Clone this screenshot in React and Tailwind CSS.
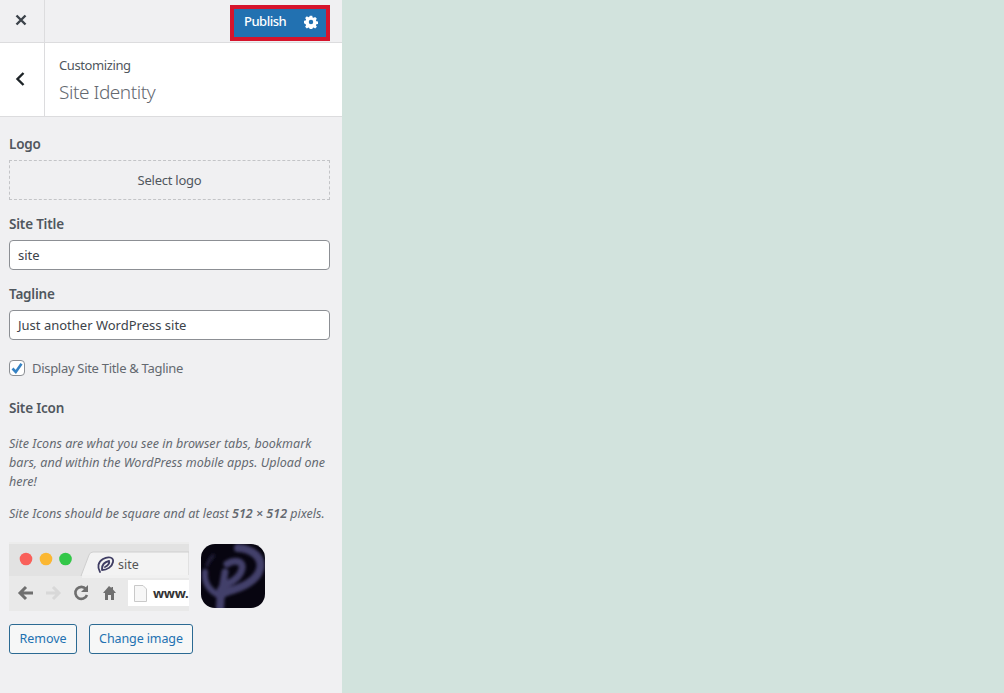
const font = { fontFamily: '"Noto Sans", "Open Sans", sans-serif' };

function Label({ children, className = "" }) {
  return <div className={`text-[13.5px] leading-[20px] font-semibold tracking-[-0.2px] text-[#50575e] ${className}`}>{children}</div>;
}

function Field({ value }) {
  return (
    <div className="mt-[6px] h-[30px] w-[321px] rounded-[4px] border border-[#8c8f94] bg-white pl-[8px] text-[13px] leading-[28px] text-[#3c434a]">
      {value}
    </div>
  );
}

function Preview() {
  return (
    <svg width="180" height="69" viewBox="0 0 180 69" className="block">
      <rect width="180" height="69" fill="#e8e8e8" />
      <rect width="180" height="36" fill="#e2e2e2" />
      <rect width="180" height="2" fill="#ececec" />
      <path d="M72 34 L80 13 Q81 10 84 10 L180 10 L180 34 Z" fill="#f3f3f3" stroke="#cfcfcf" />
      <rect x="0" y="34" width="180" height="35" fill="#e9e9e9" />
      <rect x="73" y="33" width="107" height="3" fill="#f1f1f1" />
      <circle cx="17" cy="17" r="6.300" fill="#f9605a" />
      <circle cx="37" cy="17" r="6.300" fill="#fbb732" />
      <circle cx="56.500" cy="17" r="6.300" fill="#33c748" />
      <g fill="none" stroke="#3f3d63" strokeWidth="1.800" strokeLinecap="round">
        <path d="M91 30 C88 25 89 20 94 17 C99 14 105 15 104 20 C103 25 98 28 93 28" />
        <path d="M93 27 C93 23 95 20 100 19 C101 22 98 24 96 25" />
      </g>
      <g stroke="#6f6f6f" fill="none" strokeWidth="3">
        <path d="M24 51 H12 M17 45 L11 51 L17 57" />
      </g>
      <g stroke="#d8d8d8" fill="none" strokeWidth="3">
        <path d="M37 51 H49 M44 45 L50 51 L44 57" />
      </g>
      <path d="M77 47 A6 6 0 1 0 78 53" stroke="#6f6f6f" strokeWidth="2.600" fill="none" />
      <path d="M79 43 V50 H72 Z" fill="#6f6f6f" />
      <path d="M100 44 L94 51 H96 V58 H99 V53 H102 V58 H105 V51 H107 L104 47.500 V45 H102.500 V46 Z" fill="#6f6f6f" />
      <rect x="119" y="38" width="61" height="26" fill="#ffffff" />
      <path d="M125.500 43.500 H134 L137.500 47 V59.500 H125.500 Z" fill="#f7f7f7" stroke="#c9c9c9" />
    </svg>
  );
}

function SiteIcon() {
  return (
    <svg width="64" height="64" viewBox="0 0 64 64" className="block ml-[12px] mt-[2px] shrink-0 rounded-[14px]">
      <defs>
        <filter id="blur"><feGaussianBlur stdDeviation="1.500" /></filter>
      </defs>
      <rect width="64" height="64" fill="#070510" />
      <g fill="none" stroke="#433f6b" filter="url(#blur)" strokeLinecap="round">
        <path d="M19 66 C19 58 20 52 20 46" strokeWidth="8" />
        <path d="M24 28 C23 34 22 40 21 46" strokeWidth="7" />
        <path d="M26 20 C34 15 43 17 41 25 C39 33 33 37 26 40" strokeWidth="7" />
        <path d="M37 4 C52 5 62 14 59 25 C56 37 40 44 28 47 C24 48 21 50 19 52" strokeWidth="8" />
        <path d="M4 28 C3 38 8 46 17 51" strokeWidth="6" />
        <path d="M12 12 C9 15 7 18 6 21" strokeWidth="4" stroke="#1e1b36" />
      </g>
    </svg>
  );
}

export default function App() {
  return (
    <div className="flex min-h-[693px] w-full bg-[#d2e3dd] overflow-hidden" style={font}>
      <aside className="w-[342px] shrink-0 bg-[#f0f0f2] flex flex-col">
        <div className="h-[43px] flex items-stretch border-b border-[#dcdcde]">
          <div className="w-[45px] border-r border-[#dcdcde] flex items-center justify-center pr-[2px] pb-[2px]">
            <svg width="14" height="14" viewBox="0 0 14 14" fill="none" stroke="#3c434a" strokeWidth="2.400">
              <path d="M2.500 2.500 L11.500 11.500 M11.500 2.500 L2.500 11.500" />
            </svg>
          </div>
          <div className="flex-1 flex justify-end items-start pt-[5px] pr-[12px]">
            <div className="w-[100px] h-[36px] border-[4px] border-[#d6142c] bg-[#2271b1] flex items-center justify-between pl-[10px] pr-[8px] pb-[2px] text-[13px] tracking-[-0.5px] font-medium text-white">
              <span>Publish</span>
              <svg width="14" height="14" viewBox="0 0 20 20" fill="#ffffff">
                <path fillRule="evenodd" d="M8.200 1h3.600l.5 2.500 1.500.6 2.100-1.400 2.500 2.500-1.400 2.100.6 1.500 2.400.5v3.500l-2.400.5-.6 1.500 1.400 2.100-2.500 2.500-2.100-1.400-1.500.6-.5 2.400H8.200l-.5-2.400-1.500-.6-2.100 1.400-2.500-2.500 1.400-2.100-.6-1.500L0 11.800V8.300l2.400-.5.6-1.500-1.400-2.100 2.500-2.500 2.100 1.400 1.500-.6zM10 13.200a3.200 3.200 0 1 0 0-6.400 3.200 3.200 0 0 0 0 6.400z" />
              </svg>
            </div>
          </div>
        </div>

        <div className="h-[74px] flex items-stretch bg-white border-b border-[#dcdcde]">
          <div className="w-[45px] border-r border-[#dcdcde] flex items-center justify-center pr-[4px] pb-[2px]">
            <svg width="12" height="16" viewBox="0 0 12 16" fill="none" stroke="#1d2327" strokeWidth="2.400">
              <path d="M9.500 2 L3.500 8 L9.500 14" />
            </svg>
          </div>
          <div className="pl-[14px] pt-[13px]">
            <div className="text-[13px] leading-[19px] tracking-[-0.4px] text-[#50575e]">Customizing</div>
            <div className="text-[19px] leading-[27px] mt-[4px] tracking-[-0.45px] font-light text-[#646970]">Site Identity</div>
          </div>
        </div>

        <div className="pl-[9px] pt-[17px] flex flex-col">
          <Label>Logo</Label>
          <div className="mt-[6px] h-[40px] w-[321px] border border-dashed border-[#c3c4c7] flex items-center justify-center pt-[2px] text-[13px] tracking-[-0.25px] text-[#50575e]">
            Select logo
          </div>

          <Label className="mt-[14px]">Site Title</Label>
          <Field value="site" />

          <Label className="mt-[14px]">Tagline</Label>
          <Field value="Just another WordPress site" />

          <div className="mt-[20px] h-[16px] flex items-center gap-[7px]">
            <div className="w-[16px] h-[16px] rounded-[4px] border border-[#8c8f94] bg-white flex items-center justify-center">
              <svg width="14" height="14" viewBox="0 0 14 14" fill="none" stroke="#3582c4" strokeWidth="2.600">
                <path d="M2.500 7.500 L5.800 11 L11.500 2.800" />
              </svg>
            </div>
            <span className="pt-[2px] text-[13px] tracking-[-0.3px] text-[#646970]">Display Site Title &amp; Tagline</span>
          </div>

          <Label className="mt-[22px]">Site Icon</Label>

          <div className="mt-[16px] w-[325px] text-[12.500px] leading-[19px] tracking-[0.03px] italic text-[#646970]">
            Site Icons are what you see in browser tabs, bookmark bars, and within the WordPress mobile apps. Upload one here!
          </div>
          <div className="mt-[13px] text-[12.500px] leading-[19px] italic text-[#646970] whitespace-nowrap">
            Site Icons should be square and at least <b className="font-semibold">512 × 512</b> pixels.
          </div>

          <div className="mt-[19px] flex items-start">
            <div className="relative w-[180px] h-[69px]">
              <Preview />
              <span className="absolute left-[109px] top-[14px] text-[12.500px] leading-[18px] text-[#555]">site</span>
              <span className="absolute left-[144px] top-[41px] text-[13px] leading-[20px] tracking-[-0.3px] font-bold text-[#333]">www.</span>
            </div>
            <SiteIcon />
          </div>

          <div className="mt-[13px] flex gap-[12px]">
            <div className="w-[68px] h-[30px] rounded-[3px] border border-[#2b6a93] bg-[#f6f7f7] flex items-center justify-center pt-[1px] text-[12.500px] text-[#2271b1]">Remove</div>
            <div className="w-[104px] h-[30px] rounded-[3px] border border-[#2b6a93] bg-[#f6f7f7] flex items-center justify-center pt-[1px] text-[12.500px] tracking-[-0.1px] text-[#2271b1]">Change image</div>
          </div>
        </div>
      </aside>
      <main className="flex-1" />
    </div>
  );
}
